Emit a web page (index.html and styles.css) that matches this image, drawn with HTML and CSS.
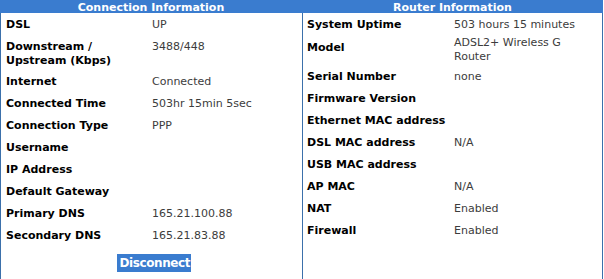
FILE: index.html
```html
<!DOCTYPE html>
<html>
<head>
<meta charset="utf-8">
<link rel="stylesheet" href="styles.css">
</head>
<body>
<div class="wrap">
  <section class="panel panel-left">
    <div class="head">Connection Information</div>
    <div class="body">
      <div class="row"><div class="label">DSL</div><div class="value">UP</div></div>
      <div class="row row-tall"><div class="label">Downstream /<br>Upstream (Kbps)</div><div class="value">3488/448</div></div>
      <div class="row"><div class="label">Internet</div><div class="value">Connected</div></div>
      <div class="row"><div class="label">Connected Time</div><div class="value">503hr 15min 5sec</div></div>
      <div class="row"><div class="label">Connection Type</div><div class="value">PPP</div></div>
      <div class="row"><div class="label">Username</div><div class="value"></div></div>
      <div class="row"><div class="label">IP Address</div><div class="value"></div></div>
      <div class="row"><div class="label">Default Gateway</div><div class="value"></div></div>
      <div class="row"><div class="label">Primary DNS</div><div class="value">165.21.100.88</div></div>
      <div class="row"><div class="label">Secondary DNS</div><div class="value">165.21.83.88</div></div>
      <div class="actions"><button class="btn" type="button">Disconnect</button></div>
    </div>
  </section>
  <section class="panel panel-right">
    <div class="head">Router Information</div>
    <div class="body">
      <div class="row"><div class="label">System Uptime</div><div class="value">503 hours 15 minutes</div></div>
      <div class="row row-model"><div class="label">Model</div><div class="value">ADSL2+ Wireless G<br>Router</div></div>
      <div class="row"><div class="label">Serial Number</div><div class="value">none</div></div>
      <div class="row"><div class="label">Firmware Version</div><div class="value"></div></div>
      <div class="row"><div class="label">Ethernet MAC address</div><div class="value"></div></div>
      <div class="row"><div class="label">DSL MAC address</div><div class="value">N/A</div></div>
      <div class="row"><div class="label">USB MAC address</div><div class="value"></div></div>
      <div class="row"><div class="label">AP MAC</div><div class="value">N/A</div></div>
      <div class="row"><div class="label">NAT</div><div class="value">Enabled</div></div>
      <div class="row"><div class="label">Firewall</div><div class="value">Enabled</div></div>
    </div>
  </section>
</div>
</body>
</html>
```
FILE: styles.css
```css
html, body {
  margin: 0;
  padding: 0;
  background: #ffffff;
  overflow: hidden;
}
body {
  font-family: "DejaVu Sans", Verdana, sans-serif;
  font-size: 11px;
  color: #000;
}
.wrap {
  display: flex;
  width: 603px;
  height: 279px;
}
.panel {
  box-sizing: border-box;
  border-left: 1px solid #3b70ab;
  height: 279px;
}
.panel-left {
  width: 302px;
}
.panel-right {
  width: 301px;
  border-right: 1px solid #3b70ab;
}
.head {
  box-sizing: border-box;
  height: 13px;
  padding-top: 1px;
  line-height: 13px;
  margin-left: -1px;
  background: #3a7ccf;
  color: #ffffff;
  font-weight: bold;
  text-align: center;
  overflow: hidden;
  white-space: nowrap;
}
.panel-right .head {
  margin-right: -1px;
}
.body {
  padding-top: 1px;
}
.row {
  display: flex;
  padding: 4px 0;
  line-height: 14px;
}
.panel-left .row {
  padding-left: 5px;
}
.panel-right .row {
  padding-left: 4px;
}
.label {
  font-weight: bold;
  flex: 0 0 auto;
  white-space: nowrap;
}
.panel-left .label {
  width: 146px;
}
.panel-right .label {
  width: 147px;
}
.value {
  color: #3c3c3c;
  white-space: nowrap;
}
.row-tall {
  padding-bottom: 3px;
}
.row-model {
  padding-top: 0;
  padding-bottom: 2px;
}
.row-model .label {
  padding-top: 5px;
}
.actions {
  display: flex;
  justify-content: center;
  padding-top: 7px;
  padding-left: 4px;
}
.btn {
  box-sizing: border-box;
  width: 74px;
  height: 18px;
  padding: 0 0 0 3px;
  border: none;
  background: #3a7ccf;
  color: #ffffff;
  font-family: "DejaVu Sans", Verdana, sans-serif;
  font-size: 12px;
  font-weight: bold;
  letter-spacing: -0.4px;
  line-height: 18px;
  text-align: left;
  white-space: nowrap;
  overflow: hidden;
}
```
